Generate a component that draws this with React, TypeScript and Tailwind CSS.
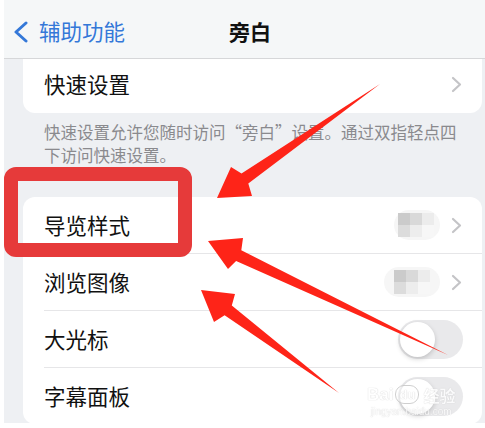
import React from 'react';

const FONT = { fontFamily: '"Noto Sans CJK SC", "Noto Sans", sans-serif' };

const Chevron: React.FC = () => (
    <svg width="11" height="17" viewBox="0 0 11 17" className="shrink-0">
        <path d="M2 2 L9 8.5 L2 15" fill="none" stroke="#c4c4c7" strokeWidth="2.2" strokeLinecap="round" strokeLinejoin="round" />
    </svg>
);

// Blurred (mosaic) value placeholder
const Mosaic: React.FC<{ wide?: boolean }> = ({ wide }) => (
    <div className={`relative mr-[11px] flex items-center rounded-full bg-[#f6f6f6] ${wide ? 'w-[56px]' : 'w-[46px]'} h-[30px]`}>
        <div className={`absolute ${wide ? 'left-[10px]' : 'left-[4px]'} top-[3px] grid grid-cols-3 blur-[0.6px]`}>
            <div className="w-[12px] h-[12px] bg-[#cbcbcb]" />
            <div className="w-[12px] h-[12px] bg-[#d9d9d9]" />
            <div className="w-[12px] h-[12px] bg-[#ececec]" />
            <div className="w-[12px] h-[12px] bg-[#dcdcdc]" />
            <div className="w-[12px] h-[12px] bg-[#ededed]" />
            <div className="w-[12px] h-[12px] bg-[#f7f7f7]" />
        </div>
    </div>
);

const Toggle: React.FC = () => (
    <div className="w-[65px] h-[39px] rounded-full bg-[#e9e9eb] p-[2px] flex items-center">
        <div className="w-[35px] h-[35px] rounded-full bg-white shadow-[0_2px_5px_rgba(0,0,0,0.18)]" />
    </div>
);

const Row: React.FC<{ label: string; right: React.ReactNode; pr?: string }> = ({ label, right, pr = 'pr-[20px]' }) => (
    <div className={`h-[56px] flex items-center justify-between pl-[21px] ${pr}`}>
        <span className="text-[21.5px] text-[#111]">{label}</span>
        <div className="flex items-center">{right}</div>
    </div>
);

const Separator: React.FC = () => <div className="ml-[21px] h-px bg-[#e6e6e8]" />;

export default function App() {
    return (
        <div className="relative w-[485px] h-[428px] bg-white overflow-hidden" style={FONT}>
            {/* Phone screen */}
            <div className="ml-[4px] w-[481px] h-[423px] bg-[#eef0f3] overflow-hidden">
                {/* Nav bar */}
                <div className="h-[59px] pt-[5px] flex items-center bg-[#f5f7f8] border-b border-[#d6d7d9]">
                    <svg width="16" height="22" viewBox="0 0 16 22" className="ml-[9px]">
                        <path d="M13 2 L3 11 L13 20" fill="none" stroke="#3478d8" strokeWidth="3" strokeLinecap="round" strokeLinejoin="round" />
                    </svg>
                    <span className="ml-[10px] text-[21.5px] text-[#3478d8]">辅助功能</span>
                    <span className="ml-[104px] text-[21px] font-bold text-[#111]">旁白</span>
                </div>

                {/* Quick settings card */}
                <div className="ml-[19px] w-[459px] bg-white rounded-b-[12px]">
                    <div className="h-[54px] pb-[4px] flex items-center justify-between pl-[21px] pr-[20px]">
                        <span className="text-[21.5px] text-[#111]">快速设置</span>
                        <Chevron />
                    </div>
                </div>

                <p className="mt-[8px] mb-[30px] pl-[40px] w-[462px] text-[16.5px] leading-[23px] text-[#8a8a8e]">
                    快速设置允许您随时访问“旁白”设置。通过双指轻点四下访问快速设置。
                </p>

                {/* Options card */}
                <div className="ml-[19px] w-[459px] bg-white rounded-[12px]">
                    <Row label="导览样式" right={<><Mosaic /><Chevron /></>} />
                    <Separator />
                    <Row label="浏览图像" right={<><Mosaic wide /><Chevron /></>} />
                    <Separator />
                    <Row label="大光标" right={<Toggle />} pr="pr-[19px]" />
                    <Separator />
                    <Row label="字幕面板" right={<Toggle />} pr="pr-[19px]" />
                </div>
            </div>

            {/* Baidu watermark */}
            <div className="absolute left-[367px] top-[385px] flex flex-col items-center text-white opacity-80 [text-shadow:0_0_1px_#b5b5b5]">
                <div className="flex items-center gap-[2px] text-[17px] font-bold leading-none" style={{ fontFamily: '"Liberation Sans", "Noto Sans CJK SC", sans-serif' }}>
                    <span>Bai</span>
                    <span className="w-[24px] h-[19px] rounded-[9px] border border-[#c4c4c4] bg-white/50 text-[13px] flex items-center justify-center text-white">du</span>
                    <span className="ml-[2px] text-[16px]" style={FONT}>经验</span>
                </div>
                <span className="mt-[3px] text-[10px] leading-none" style={{ fontFamily: '"Liberation Sans", sans-serif' }}>jingyan.baidu.com</span>
            </div>

            {/* Annotations */}
            <div className="absolute left-[4px] top-[167px] w-[188px] h-[90px] rounded-[12px] border-[14px] border-[#e63a3a]" />
            <svg className="absolute inset-0 pointer-events-none" width="485" height="428" viewBox="0 0 485 428">
                <polygon points="217,198 231,167 241.5,173.6 380,84 248.3,183.4 252,196" fill="#fe2418" />
                <polygon points="208,241 243,238 241.3,250.2 448,355 236.1,261 228,269" fill="#fe2418" />
                <polygon points="201,290 235,294 231.8,305.6 339,393 224.6,315.2 214,322" fill="#fe2418" />
            </svg>
        </div>
    );
}
